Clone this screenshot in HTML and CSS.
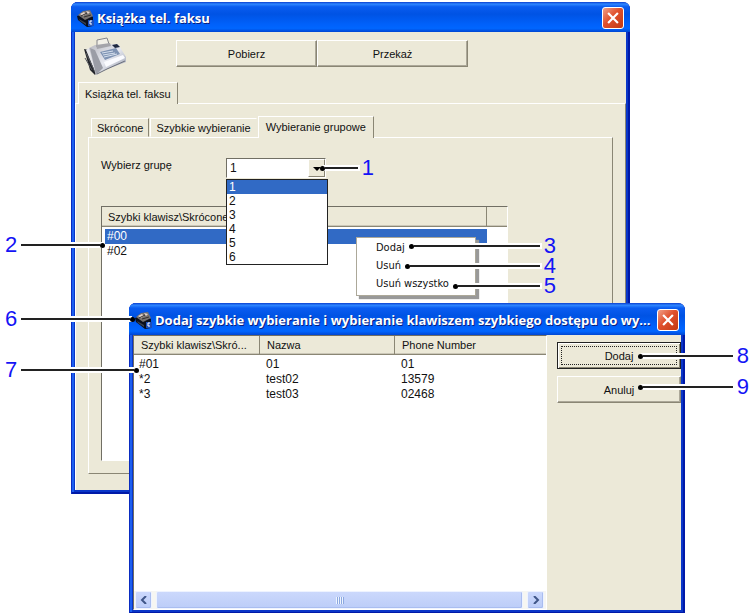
FILE: index.html
```
<!DOCTYPE html>
<html lang="pl">
<head>
    <meta charset="utf-8">
    <title>Książka tel. faksu</title>
    <link rel="stylesheet" href="styles.css">
</head>
<body>
    <svg class="defs" width="0" height="0">
        <symbol id="app-icon" viewBox="0 0 17 17">
            <path d="M0 6l9-3 7 4v9l-6 1-9-7z" fill="#0a0f1c"/>
            <path d="M1 5l5-4 7-1 3 6-8 4z" fill="#77726f"/>
            <path d="M3 4l4-2 2 2-3 2zM9 1l4 1-2 2z" fill="#e4d4cc"/>
            <path d="M7 7l7-2M4 6l6-3" stroke="#33302f" fill="none"/>
            <path d="M2 9l7 4v2l-6-4z" fill="#39414f"/>
            <path d="M11 10h6v6h-6z" fill="#1d4fb8"/>
            <path d="M15 11h-2v3h2" stroke="#fff" fill="none"/>
        </symbol>
        <symbol id="close-icon" viewBox="0 0 11 11">
            <path d="M1 1l9 9M10 1l-9 9" stroke="#fff" stroke-width="2" fill="none"/>
        </symbol>
    </svg>

    <main class="desktop">
        <!-- Main window -->
        <section class="window main-window">
            <header class="titlebar">
                <svg class="app-icon"><use href="#app-icon"/></svg>
                <h1>Książka tel. faksu</h1>
                <button class="close" type="button" aria-label="Zamknij"><svg><use href="#close-icon"/></svg></button>
            </header>
            <div class="client">
                <div class="toolbar">
                    <svg class="fax" viewBox="0 0 43 38">
                        <defs>
                            <linearGradient id="faxBody" x1="0" y1="0" x2="1" y2="1">
                                <stop offset="0" stop-color="#b9b9c0"/>
                                <stop offset="0.5" stop-color="#e6e8f0"/>
                                <stop offset="1" stop-color="#8a91a2"/>
                            </linearGradient>
                        </defs>
                        <path d="M1 12l5 1 9 20-3 5-5-5z" fill="#22242a"/>
                        <path d="M3 13l4-3 9 20-3 7z" fill="#e7e7ea"/>
                        <path d="M3 16l9 19M2 21l7 12" stroke="#55575d" fill="none"/>
                        <path d="M6 11l6-3 23-1 8 13v5l-24 9-6 4z" fill="url(#faxBody)"/>
                        <path d="M7 11l5 2 8 18-7 7z" fill="#9b9da6"/>
                        <path d="M14 10V3l10-2 2 6" fill="#f2f0e8" stroke="#85858a"/>
                        <path d="M13 8l14-2 1 3-14 3z" fill="#a4a4aa"/>
                        <path d="M17 15l16-4 4 6-15 6z" fill="#7f93b3"/>
                        <path d="M19 16l11-2M20 18l12-2M21 20l13-3" stroke="#d6e0ee" fill="none"/>
                        <path d="M29 8l5-1 3 3-5 1z" fill="#1f2940"/>
                        <path d="M21 25l19-7 2 3-19 9z" fill="#fafbff"/>
                        <path d="M14 37l10-5 18-8" stroke="#6a6e7a" fill="none"/>
                    </svg>
                    <div class="toolbar-buttons">
                        <button class="btn" type="button">Pobierz</button>
                        <button class="btn wide" type="button">Przekaż</button>
                    </div>
                </div>

                <div class="tabs outer-tabs">
                    <button class="tab active" type="button">Książka tel. faksu</button>
                </div>
                <div class="panel outer-panel">
                    <div class="tabs inner-tabs">
                        <button class="tab" type="button">Skrócone</button>
                        <button class="tab" type="button">Szybkie wybieranie</button>
                        <button class="tab active" type="button">Wybieranie grupowe</button>
                    </div>
                    <div class="panel inner-panel">
                        <div class="group-row">
                            <label for="group">Wybierz grupę</label>
                            <div class="combo">
                                <select id="group">
                                    <option selected>1</option>
                                    <option>2</option>
                                    <option>3</option>
                                    <option>4</option>
                                    <option>5</option>
                                    <option>6</option>
                                </select>
                                <span class="combo-arrow"></span>
                                <ul class="combo-list">
                                    <li class="selected">1</li>
                                    <li>2</li>
                                    <li>3</li>
                                    <li>4</li>
                                    <li>5</li>
                                    <li>6</li>
                                </ul>
                            </div>
                        </div>
                        <div class="list group-list">
                            <table>
                                <thead>
                                    <tr><th>Szybki klawisz\Skrócone</th><th class="filler"></th></tr>
                                </thead>
                                <tbody>
                                    <tr class="selected"><td>#00</td></tr>
                                    <tr><td>#02</td></tr>
                                </tbody>
                            </table>
                        </div>
                    </div>
                </div>
            </div>
        </section>

        <!-- Context menu -->
        <div class="context-menu">
            <button type="button">Dodaj</button>
            <button type="button">Usuń</button>
            <button type="button">Usuń wszystko</button>
        </div>

        <!-- Dialog -->
        <section class="window dialog">
            <header class="titlebar">
                <svg class="app-icon"><use href="#app-icon"/></svg>
                <h2>Dodaj szybkie wybieranie i wybieranie klawiszem szybkiego dostępu do wy...</h2>
                <button class="close" type="button" aria-label="Zamknij"><svg><use href="#close-icon"/></svg></button>
            </header>
            <div class="client dialog-body">
                <div class="list entry-list">
                    <table>
                        <thead>
                            <tr><th class="key">Szybki klawisz\Skró...</th><th class="name">Nazwa</th><th>Phone Number</th></tr>
                        </thead>
                        <tbody>
                            <tr><td>#01</td><td>01</td><td>01</td></tr>
                            <tr><td>*2</td><td>test02</td><td>13579</td></tr>
                            <tr><td>*3</td><td>test03</td><td>02468</td></tr>
                        </tbody>
                    </table>
                    <div class="scrollbar">
                        <button type="button" aria-label="W lewo"><svg viewBox="0 0 8 8"><path d="M6 0L2 4l4 4"/></svg></button>
                        <div class="thumb"><span class="grip"></span></div>
                        <button type="button" aria-label="W prawo"><svg viewBox="0 0 8 8"><path d="M2 0l4 4-4 4"/></svg></button>
                    </div>
                </div>
                <div class="dialog-buttons">
                    <button class="btn default" type="button">Dodaj</button>
                    <button class="btn" type="button">Anuluj</button>
                </div>
            </div>
        </section>

        <!-- Numbered callouts -->
        <div class="callout c1"><i></i><b></b><span>1</span></div>
        <div class="callout from-left c2"><i></i><b></b><span>2</span></div>
        <div class="callout c3"><i></i><b></b><span>3</span></div>
        <div class="callout c4"><i></i><b></b><span>4</span></div>
        <div class="callout c5"><i></i><b></b><span>5</span></div>
        <div class="callout from-left c6"><i></i><b></b><span>6</span></div>
        <div class="callout from-left c7"><i></i><b></b><span>7</span></div>
        <div class="callout c8"><i></i><b></b><span>8</span></div>
        <div class="callout c9"><i></i><b></b><span>9</span></div>
    </main>
</body>
</html>
```
FILE: styles.css
```
* {
    box-sizing: border-box;
}

body {
    margin: 0;
    background: white;
    font-family: "Liberation Sans", Arial, sans-serif;
    font-size: 11px;
    color: #111;
}

button,
select {
    font: inherit;
    color: inherit;
}

.defs {
    position: absolute;
}

.desktop {
    position: relative;
    min-height: 613px;
    overflow: hidden;
}

/* Windows */
.window {
    position: absolute;
    display: flex;
    flex-direction: column;
    padding: 0 4px 4px;
    background: #0a36c8;
    border-radius: 7px 7px 0 0;
    box-shadow: inset 1px 0 #0a2cc0, inset -2px -2px #0019a8, inset 3px 0 #1c5ff0;
}

.main-window {
    left: 71px;
    right: 120px;
    top: 2px;
}

.dialog {
    left: 129px;
    right: 65px;
    top: 303px;
}

.titlebar {
    display: flex;
    align-items: center;
    gap: 3px;
    height: 30px;
    margin: 0 -4px;
    padding: 2px 6px 0;
    border-radius: 7px 7px 0 0;
    background: linear-gradient(#0a3fd0 0, #2e86ff 7%, #0a5cf0 16%, #0053e4 40%, #0061fb 75%, #0066ff 88%, #0046d2 100%);
}

.titlebar h1,
.titlebar h2 {
    flex: 1;
    margin: 0;
    overflow: hidden;
    white-space: nowrap;
    font: bold 13px/20px "Open Sans", "Noto Sans", sans-serif;
    color: white;
    text-shadow: 1px 1px #0a1f80;
}

.app-icon {
    width: 17px;
    height: 17px;
    flex: none;
}

.close {
    display: grid;
    place-items: center;
    flex: none;
    width: 22px;
    height: 22px;
    padding: 0;
    border: 1px solid white;
    border-radius: 3px;
    background: linear-gradient(135deg, #f0a088, #e0502c 45%, #c23a14);
}

.close svg {
    width: 12px;
    height: 12px;
}

.client {
    background: #ece9d8;
}

/* Toolbar */
.toolbar {
    display: flex;
    align-items: flex-start;
    gap: 50px;
    padding: 5px 8px 7px;
}

.fax {
    width: 43px;
    height: 38px;
}

.toolbar-buttons {
    display: flex;
    padding-top: 3px;
}

.toolbar-buttons .btn {
    width: 141px;
}

.toolbar-buttons .wide {
    width: 151px;
}

.btn {
    height: 27px;
    padding: 0 6px;
    border: 1px solid;
    border-color: #fff #8a8674 #8a8674 #fff;
    background: #ece9d8;
    box-shadow: inset -1px -1px #aca899;
}

.btn.default {
    border: 1px solid #222;
    box-shadow: inset 1px 1px #fff, inset -1px -1px #8a8674;
    outline: 1px dotted #222;
    outline-offset: -5px;
}

/* Tabs */
.tabs {
    display: flex;
    align-items: flex-end;
    gap: 1px;
    padding-left: 3px;
}

.tab {
    height: 19px;
    padding: 0 5px;
    border: 1px solid;
    border-color: #fff #8a8674 transparent #fff;
    background: #ece9d8;
    white-space: nowrap;
}

.tab.active {
    position: relative;
    height: 22px;
    margin-bottom: -1px;
    padding: 0 7px 2px;
    border-bottom: 0;
}

.tab:has(+ .active) {
    border-right-color: transparent;
}

.outer-tabs .tab.active {
    padding: 0 6px;
}

.panel {
    border: 1px solid;
    border-color: #fff #8a8674 #8a8674 #fff;
}

.outer-panel {
    padding: 12px 12px 16px;
    border-bottom: 0;
}

.inner-panel {
    padding: 20px 12px 12px;
}

/* Group selector */
.group-row {
    display: flex;
    align-items: flex-start;
    min-height: 48px;
}

.group-row label {
    width: 125px;
    line-height: 14px;
}

.combo {
    position: relative;
    width: 100px;
}

.combo select {
    display: block;
    width: 100%;
    height: 20px;
    padding: 0 3px;
    appearance: none;
    border: 1px solid;
    border-color: #716f64 #fff #fff #716f64;
    border-radius: 0;
    background: white;
    font-size: 12px;
}

.combo-arrow {
    position: absolute;
    top: 1px;
    right: 1px;
    width: 17px;
    height: 18px;
    border: 1px solid;
    border-color: #fff #8a8674 #8a8674 #fff;
    background: #ece9d8;
    pointer-events: none;
}

.combo-arrow::after {
    content: "";
    position: absolute;
    top: 7px;
    left: 4px;
    border: 4px solid transparent;
    border-top-color: #000;
    border-bottom: 0;
}

.combo-list {
    position: absolute;
    top: 21px;
    left: 0;
    right: -2px;
    margin: 0;
    padding: 0;
    list-style: none;
    border: 1px solid #222;
    background: white;
    font-size: 12px;
    line-height: 14px;
}

.combo-list li {
    padding: 0 2px;
}

.selected {
    background: #316ac5;
    color: white;
}

/* Lists */
.list {
    background: white;
    border: 1px solid;
    border-color: #716f64 #fff #fff #716f64;
}

.list table {
    width: 100%;
    table-layout: fixed;
    border-collapse: separate;
    border-spacing: 0;
}

.list th {
    height: 20px;
    padding: 0 6px;
    border-bottom: 1px solid #8a8674;
    border-right: 1px solid #8a8674;
    background: #ece9d8;
    box-shadow: inset 0 -1px #cbc7b8;
    font-weight: normal;
    text-align: left;
    white-space: nowrap;
}

.list th:last-child {
    border-right: 0;
}

.list td {
    height: 15px;
    padding: 0 6px;
    line-height: 15px;
    font-size: 12px;
}

.group-list {
    margin-right: 92px;
    min-height: 255px;
}

.group-list .filler {
    width: 20px;
}

.group-list tbody::before,
.entry-list tbody::before {
    content: "";
    display: block;
    height: 2px;
}

.group-list td {
    padding: 0 5px;
}

.group-list .selected {
    background: none;
}

.group-list .selected td {
    background: #316ac5;
    background-clip: padding-box;
    border-left: 3px solid transparent;
    padding-left: 2px;
}

/* Context menu */
.context-menu {
    position: absolute;
    left: 356px;
    top: 237px;
    display: flex;
    flex-direction: column;
    width: 120px;
    padding: 1px 2px 2px;
    border: 1px solid #aca899;
    background: white;
    box-shadow: 3px 3px 1px #999;
}

.context-menu button {
    height: 18px;
    padding: 0 0 0 17px;
    border: 0;
    background: none;
    font: 11px/18px "DejaVu Sans Condensed", Tahoma, sans-serif;
    text-align: left;
}

/* Dialog */
.dialog-body {
    display: flex;
}

.dialog .titlebar {
    height: 32px;
}

.entry-list {
    display: flex;
    flex-direction: column;
    flex: 1;
    min-height: 275px;
}

.entry-list th {
    height: 19px;
    padding-left: 7px;
}

.entry-list .key {
    width: 126px;
}

.entry-list .name {
    width: 135px;
}

.entry-list td {
    padding-left: 5px;
}

.entry-list td:nth-child(n + 2) {
    padding-left: 6px;
}

.scrollbar {
    display: flex;
    gap: 4px;
    margin-top: auto;
    padding: 0 2px 0 1px;
    height: 18px;
    background: #f6f6f2;
}

.scrollbar button,
.thumb {
    display: grid;
    place-items: center;
    padding: 0;
    border: 1px solid #eef3ff;
    border-radius: 2px;
    background: linear-gradient(#cbd8fc, #bccdf8);
    box-shadow: inset -1px -1px #a9bdf0;
}

.scrollbar button {
    width: 17px;
}

.scrollbar svg {
    width: 8px;
    height: 8px;
    fill: none;
    stroke: #3f5688;
    stroke-width: 2;
}

.thumb {
    flex: 1;
}

.grip {
    width: 8px;
    height: 7px;
    background: repeating-linear-gradient(90deg, #eef4ff 0 1px, #8ca8e0 1px 2px);
}

.dialog-buttons {
    display: flex;
    flex-direction: column;
    gap: 7px;
    width: 134px;
    padding: 7px 0 0 10px;
}

/* Callouts: dot, line, number */
.callout {
    position: absolute;
    display: flex;
    align-items: center;
    height: 20px;
}

.callout i {
    width: 5px;
    height: 5px;
    border-radius: 50%;
    background: black;
    z-index: 1;
}

.callout b {
    flex: 1;
    height: 2px;
    background: #222;
    box-shadow: 0 0 0 2px white;
}

.callout span {
    margin-left: 4px;
    font-size: 22px;
    line-height: 18px;
    color: #1414f5;
}

.from-left {
    flex-direction: row-reverse;
    left: 5px;
}

.from-left span {
    margin: 0 4px 0 0;
}

.c1 { left: 320px; top: 158px; width: 54px; }
.c2 { top: 235px; width: 100px; }
.c3 { left: 409px; top: 236px; width: 147px; }
.c4 { left: 405px; top: 256px; width: 151px; }
.c5 { left: 453px; top: 276px; width: 103px; }
.c6 { top: 309px; width: 130px; }
.c7 { top: 360px; width: 134px; }
.c8 { right: 1px; top: 346px; width: 111px; }
.c9 { right: 1px; top: 377px; width: 111px; }
```
